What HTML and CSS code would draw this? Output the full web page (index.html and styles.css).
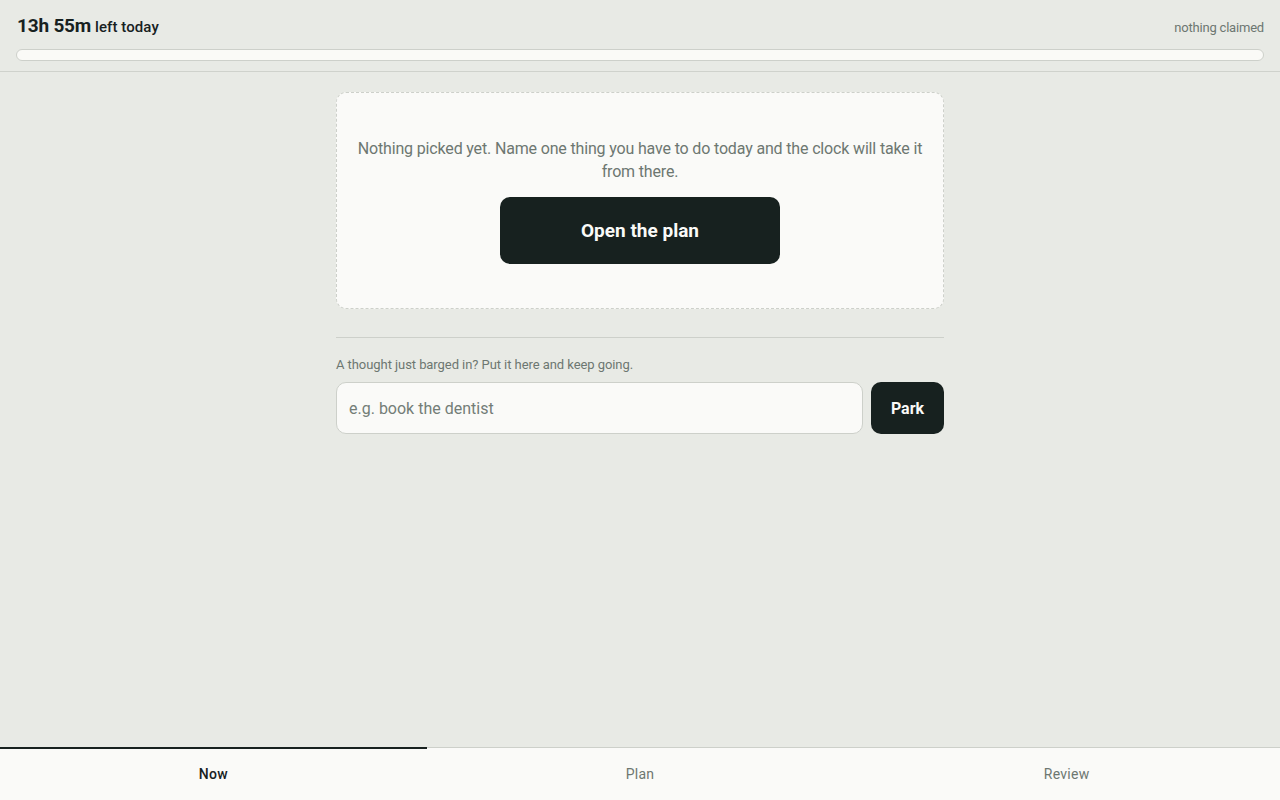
FILE: index.html
```html
<!DOCTYPE html>
<html lang="en">
<head>
<meta charset="utf-8">
<title>Now</title>
<link rel="stylesheet" href="styles.css">
</head>
<body>
<div class="app">
  <header class="topbar">
    <div class="topbar-row">
      <div class="remaining"><span class="remaining-time">13h 55m</span> <span class="remaining-label">left today</span></div>
      <div class="claimed">nothing claimed</div>
    </div>
    <div class="progress"><div class="progress-fill"></div></div>
  </header>
  <main class="main">
    <div class="column">
      <section class="empty-card">
        <p class="empty-text">Nothing picked yet. Name one thing you have to do today and the clock will take it from there.</p>
        <button class="btn-primary" type="button">Open the plan</button>
      </section>
      <hr class="divider">
      <label class="park-label" for="park">A thought just barged in? Put it here and keep going.</label>
      <div class="park-row">
        <input id="park" class="park-input" type="text" placeholder="e.g. book the dentist">
        <button class="btn-park" type="button">Park</button>
      </div>
    </div>
  </main>
  <nav class="tabs">
    <a class="tab tab-active">Now</a>
    <a class="tab">Plan</a>
    <a class="tab">Review</a>
  </nav>
</div>
</body>
</html>
```
FILE: styles.css
```css
* { box-sizing: border-box; }
html, body { margin: 0; padding: 0; height: 100%; }
body {
  background: #e8eae5;
  color: #17211f;
  font-family: Roboto, "Liberation Sans", sans-serif;
}
.app {
  display: flex;
  flex-direction: column;
  height: 100vh;
}
.topbar {
  padding: 14px 16px 10px;
  border-bottom: 1px solid #cfd2cc;
}
.topbar-row {
  display: flex;
  justify-content: space-between;
  align-items: baseline;
  height: 24px;
}
.remaining {
  padding-left: 1px;
}
.remaining-time {
  font-size: 19px;
  font-weight: 700;
  letter-spacing: -0.01em;
}
.remaining-label {
  font-size: 15px;
  font-weight: 500;
  letter-spacing: 0.005em;
}
.claimed {
  font-size: 13px;
  color: #6d7771;
  letter-spacing: -0.015em;
}
.progress {
  margin-top: 11px;
  height: 12px;
  border: 1px solid #cdd0ca;
  border-radius: 6px;
  background: #fafaf7;
  overflow: hidden;
}
.progress-fill { width: 0; height: 100%; background: #17211f; }
.main {
  flex: 1;
  display: flex;
  justify-content: center;
  padding-top: 20px;
}
.column {
  width: 608px;
  display: flex;
  flex-direction: column;
}
.empty-card {
  border: 1px dashed #cdd0ca;
  border-radius: 10px;
  background: #fafaf8;
  padding: 44px 20px 44px;
  display: flex;
  flex-direction: column;
  align-items: center;
  gap: 14px;
}
.empty-text {
  margin: 0;
  font-size: 16px;
  line-height: 23px;
  color: #6d7771;
  text-align: center;
  letter-spacing: -0.01em;
}
.btn-primary {
  width: 280px;
  height: 67px;
  border: 0;
  border-radius: 10px;
  background: #17211f;
  color: #fafaf8;
  font-family: inherit;
  font-size: 19px;
  font-weight: 700;
}
.divider {
  margin: 28px 0 0;
  border: 0;
  border-top: 1px solid #cdd0ca;
}
.park-label {
  margin-top: 19px;
  font-size: 13px;
  line-height: 16px;
  color: #6d7771;
  letter-spacing: -0.005em;
}
.park-row {
  display: flex;
  gap: 8px;
  margin-top: 9px;
}
.park-input {
  flex: 1;
  height: 52px;
  border: 1px solid #cdd0ca;
  border-radius: 10px;
  background: #fafaf8;
  padding: 0 12px;
  font-family: inherit;
  font-size: 16px;
  color: #17211f;
}
.park-input::placeholder { color: #737d77; }
.btn-park {
  width: 73px;
  height: 52px;
  border: 0;
  border-radius: 10px;
  background: #17211f;
  color: #fafaf8;
  font-family: inherit;
  font-size: 16px;
  font-weight: 700;
}
.tabs {
  display: grid;
  grid-template-columns: repeat(3, 1fr);
  height: 53px;
  background: #fafaf8;
  border-top: 1px solid #cdd0ca;
}
.tab {
  display: flex;
  align-items: center;
  justify-content: center;
  font-size: 14px;
  letter-spacing: 0.02em;
  color: #6d7771;
  margin-top: -1px;
  padding-bottom: 2px;
  border-top: 2px solid transparent;
}
.tab-active {
  color: #17211f;
  font-weight: 500;
  border-top-color: #17211f;
}
```
